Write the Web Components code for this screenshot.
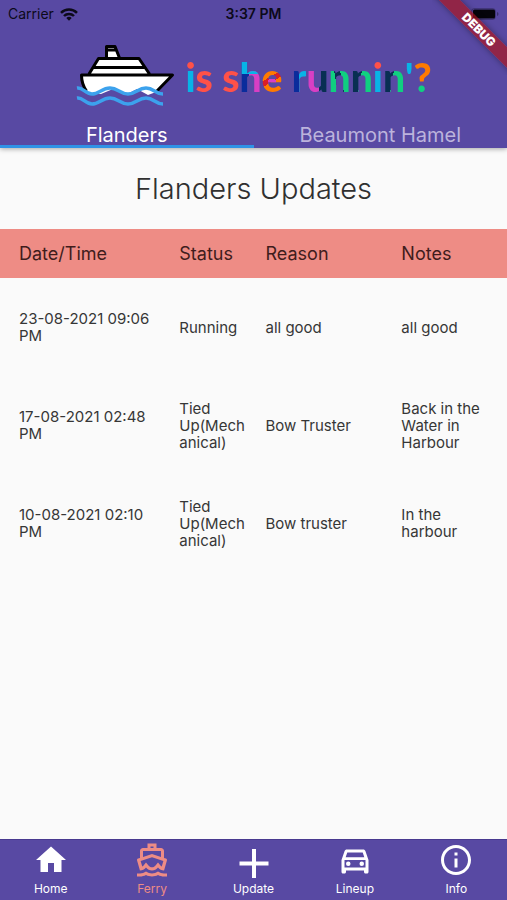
<!DOCTYPE html>
<html lang="en">
<head>
<meta charset="utf-8">
<meta name="viewport" content="width=device-width, initial-scale=1">
<title>is she runnin'?</title>
<style>
html, body { margin: 0; height: 100%; }
body { font-family: Inter, "Liberation Sans", sans-serif; background: #fafafa; }
</style>
</head>
<body>
<ferry-app></ferry-app>

<template id="t-app">
<style>
:host { display: flex; flex-direction: column; min-height: 100vh; position: relative; overflow: hidden; background: #fafafa; --purple: #5849a3; --salmon: #ee8c85; }
header { background: var(--purple); box-shadow: 0 1px 5px rgba(0,0,0,.35); }
main { flex: 1; }
h1 { margin: 0; padding: 25px 0 24px; font-size: 29px; line-height: 32px; font-weight: 300; text-align: center; color: #303030; }
</style>
<header>
  <status-bar></status-bar>
  <brand-logo></brand-logo>
  <tab-strip><tab-item selected>Flanders</tab-item><tab-item>Beaumont Hamel</tab-item></tab-strip>
</header>
<main>
  <h1>Flanders Updates</h1>
  <updates-table></updates-table>
</main>
<bottom-nav></bottom-nav>
<debug-ribbon>DEBUG</debug-ribbon>
</template>

<template id="t-status">
<style>
:host { display: grid; grid-template-columns: 1fr auto 1fr; align-items: center; height: 28px; padding: 0 8px; font-size: 14px; line-height: 28px; color: #0c0a1a; }
.left { display: flex; align-items: center; gap: 6px; }
.time { font-weight: 600; }
.battery { justify-self: end; }
svg { display: block; }
</style>
<span class="left">Carrier
  <svg width="18" height="13" viewBox="0 0 18 13" fill="none" stroke="#0c0a1a" stroke-width="2.5"><path d="M1 4.8a11.4 11.4 0 0 1 16 0M4 8a7 7 0 0 1 10 0"/><path d="M9 12.7 6.3 10a3.8 3.8 0 0 1 5.4 0z" fill="#0c0a1a" stroke="none"/></svg>
</span>
<span class="time">3:37 PM</span>
<svg class="battery" width="28" height="12" viewBox="0 0 28 12"><rect x=".5" y=".5" width="24" height="11" rx="3" fill="none" stroke="#0c0a1a" stroke-opacity=".3"/><rect x="2" y="1.500" width="22" height="9" rx="1.5" fill="#05040a"/><path d="M26 4v4q1.500-.6 1.500-2T26 4z" fill="#0c0a1a" fill-opacity=".4"/></svg>
</template>

<template id="t-logo">
<style>
:host { display: flex; justify-content: center; align-items: flex-start; gap: 10px; height: 94px; box-sizing: border-box; }
svg { display: block; margin-top: 15px; }
.word { margin-top: 25px; font: 900 39px/48px Lato, "Open Sans", sans-serif; white-space: pre; display: flex; }
.word span { background: var(--c); -webkit-background-clip: text; background-clip: text; -webkit-text-fill-color: transparent; }
.red { --c: #ff5148; color: #ff5148; }
.i { --c: linear-gradient(#ff5148 0 38%, #08b4e6 38%); color: #08b4e6; }
.h { --c: linear-gradient(#08b4e6 0 43%, transparent 43%), linear-gradient(90deg, #0a2c9c 0 45%, #d83fc4 45%); color: #d83fc4; }
.e { --c: radial-gradient(circle at 50% 60%, #d83fc4 0 4px, transparent 4px), linear-gradient(150deg, #ff7a00 0 48%, #d81e28 48% 58%, #ff7a00 58%); color: #ff7a00; }
.r { --c: linear-gradient(90deg, #0a2c9c 0 52%, #08b4e6 52%); color: #08b4e6; }
.u { --c: linear-gradient(90deg, #d83fc4 0 55%, #082f52 55%); color: #d83fc4; }
.n { --c: linear-gradient(100deg, #082f52 0 46%, #10cf80 46%); color: #10cf80; }
.n1 { --c: linear-gradient(80deg, #10cf80 0 34%, #082f52 34% 54%, #10cf80 54%); color: #10cf80; }
.a { --c: #08b4e6; color: #08b4e6; }
.q { --c: linear-gradient(#ff7a00 0 66%, #10cf80 66%); color: #ff7a00; }
</style>
<svg width="100" height="66" viewBox="78 43 100 66" fill="none" role="img" aria-label="Ferry">
  <path d="M84.500 75H175L159 92l-8 3-11-6-12 6-12-6-12 5-16-1z" fill="#fff"/>
  <path d="M92 74l9-15h41l11 15M109 58V47h9l4 11" fill="#fff"/>
  <path d="M159 92l16.500-17H84.500q0 9 5 16M92 74l9.500-15.500h40.500L152.500 74M97 67.500h51M109.500 58V46.500h8.500l4.500 11.500M110 50h9" stroke="#000" stroke-width="3" stroke-linejoin="round"/>
  <path d="M80 88c6-1 8 6 15 6s10-6 18-6 10 6 18 6 10-6 18-6 9 6 17 6M80 98c6-1 8 6 15 6s10-6 18-6 10 6 18 6 10-6 18-6 9 6 17 6" stroke="#3ca2ed" stroke-width="3.500"/>
</svg>
<div class="word"><span class="i">i</span><span class="red">s</span><span> </span><span class="red">s</span><span class="h">h</span><span class="e">e</span><span> </span><span class="r">r</span><span class="u">u</span><span class="n1">n</span><span class="n">n</span><span class="i">i</span><span class="n">n</span><span class="a">'</span><span class="q">?</span></div>
</template>

<template id="t-tabs">
<style>:host { display: flex; }</style>
<slot></slot>
</template>

<template id="t-tab">
<style>
:host { display: block; flex: 1 1 0; min-width: 0; }
button { display: block; width: 100%; height: 26px; border: 0; padding: 0; background: none; font: 400 20px/26px Inter, sans-serif; color: #bcb3dc; white-space: nowrap; }
:host([selected]) button { color: #fff; box-shadow: inset 0 -3px #2f92e6; }
</style>
<button type="button"><slot></slot></button>
</template>

<template id="t-table">
<style>
:host { display: block; }
table { width: 100%; border-collapse: collapse; table-layout: fixed; }
col:nth-child(1) { width: 33%; } col:nth-child(2) { width: 17%; } col:nth-child(3) { width: 27%; } col:nth-child(4) { width: 23%; }
th, td { padding: 0 8px 0 12px; text-align: left; vertical-align: middle; }
th:first-child, td:first-child { padding-left: 19px; }
th:last-child, td:last-child { padding-left: 11px; padding-right: 19px; }
th { height: 49px; background: var(--salmon); font-size: 18px; line-height: 22px; font-weight: 400; color: #401c1c; white-space: nowrap; }
td { height: 98px; font-size: 15px; line-height: 17px; color: #363636; overflow-wrap: anywhere; }
</style>
<table><colgroup><col><col><col><col></colgroup>
<thead><tr><th>Date/Time</th><th>Status</th><th>Reason</th><th>Notes</th></tr></thead>
<tbody></tbody></table>
</template>

<template id="t-nav">
<style>
:host { display: block; background: var(--purple); border-top: 1px solid #48398f; }
nav { display: flex; height: 60px; }
</style>
<nav>
<nav-item label="Home"><svg viewBox="0 0 24 24"><path d="M10 20v-6h4v6h5v-8h3L12 3 2 12h3v8z"/></svg></nav-item>
<nav-item label="Ferry" selected><svg viewBox="0 0 24 24"><path fill-rule="evenodd" d="M9 1h6v3h3c1.100 0 2 .9 2 2v4.620l1.280.42c.26.08.48.26.6.5s.14.52.06.78L20.050 19H20c-1.600 0-3.020-.88-4-2-.98 1.120-2.400 2-4 2s-3.020-.88-4-2c-.98 1.120-2.400 2-4 2h-.05l-1.900-6.680c-.09-.26-.06-.54.06-.78s.34-.42.6-.5L4 10.620V6c0-1.100.9-2 2-2h3zM11 3v1h2V3zM6 6v3.970L12 8l6 1.970V6zM4.420 12.600l1.080 3.800c.4-.2.700-.5 1-.9L8 13.700l1.500 1.800c.6.700 1.500 1.400 2.500 1.400s1.900-.7 2.500-1.400l1.500-1.800 1.500 1.800c.3.400.600.7 1 .9l1.080-3.800L12 10.110z"/><path d="M20 21c-1.390 0-2.780-.47-4-1.320-2.440 1.710-5.560 1.710-8 0C6.780 20.530 5.390 21 4 21H2v2h2c1.380 0 2.740-.35 4-.99 2.520 1.290 5.480 1.290 8 0 1.260.65 2.620.99 4 .99h2v-2z"/></svg></nav-item>
<nav-item label="Update"><svg viewBox="0 0 36 36"><path d="M16 7h4v12.500h12.500v4H20V36h-4V23.500H3.500v-4H16z"/></svg></nav-item>
<nav-item label="Lineup"><svg viewBox="0 0 24 24"><path fill-rule="evenodd" d="M18.920 6.010C18.720 5.420 18.160 5 17.500 5h-11c-.66 0-1.210.42-1.420 1.010L3 12v8c0 .55.45 1 1 1h1c.55 0 1-.45 1-1v-1h12v1c0 .55.45 1 1 1h1c.55 0 1-.45 1-1v-8zM6.850 7h10.290l1.080 3.110H5.770zM19 17H5v-5h14z"/><circle cx="7.500" cy="14.500" r="1.500"/><circle cx="16.500" cy="14.500" r="1.500"/></svg></nav-item>
<nav-item label="Info"><svg viewBox="0 0 24 24"><path d="M11 7h2v2h-2zm0 4h2v6h-2zm1-9C6.480 2 2 6.480 2 12s4.480 10 10 10 10-4.480 10-10S17.520 2 12 2zm0 18c-4.410 0-8-3.590-8-8s3.590-8 8-8 8 3.590 8 8-3.590 8-8 8z"/></svg></nav-item>
</nav>
</template>

<template id="t-item">
<style>
:host { display: block; flex: 1 1 0; min-width: 0; }
a { display: flex; flex-direction: column; align-items: center; padding-top: 2px; gap: 3px; color: #fff; text-decoration: none; font-size: 12px; line-height: 15px; }
:host([selected]) a { color: #ee8c85; }
::slotted(svg) { display: block; width: 36px; height: 36px; fill: currentColor; }
span.icon { display: block; height: 36px; }
</style>
<a href="#"><span class="icon"><slot></slot></span><span class="label"></span></a>
</template>

<template id="t-ribbon">
<style>
:host { position: absolute; top: 0; right: 0; width: 75px; height: 75px; overflow: hidden; pointer-events: none; }
div { position: absolute; left: 50%; top: 50%; width: 140px; height: 15px; margin: -16px 0 0 -61px; transform: rotate(45deg); background: rgba(172,20,28,.68); box-shadow: 0 0 6px rgba(0,0,0,.4); color: #fff; font-size: 12px; line-height: 15px; font-weight: 900; text-align: center; }
</style>
<div><slot></slot></div>
</template>

<script>
class Base extends HTMLElement {
  constructor() {
    super();
    this.attachShadow({ mode: 'open' }).append(
      document.getElementById(this.constructor.template).content.cloneNode(true));
  }
}
const define = (tag, id) => customElements.define(tag, class extends Base { static template = id; });

class UpdatesTable extends Base {
  static template = 't-table';
  connectedCallback() {
    const rows = [
      ['23-08-2021 09:06 PM', 'Running', 'all good', 'all good'],
      ['17-08-2021 02:48 PM', 'Tied Up(Mechanical)', 'Bow Truster', 'Back in the Water in Harbour'],
      ['10-08-2021 02:10 PM', 'Tied Up(Mechanical)', 'Bow truster', 'In the harbour']
    ];
    const body = this.shadowRoot.querySelector('tbody');
    body.replaceChildren();
    for (const row of rows) {
      const tr = body.insertRow();
      for (const text of row) tr.insertCell().textContent = text;
    }
  }
}

class NavItem extends Base {
  static template = 't-item';
  connectedCallback() {
    this.shadowRoot.querySelector('.label').textContent = this.getAttribute('label');
    this.shadowRoot.querySelector('a').href = '#' + this.getAttribute('label').toLowerCase();
  }
}

define('status-bar', 't-status');
define('brand-logo', 't-logo');
define('tab-item', 't-tab');
define('tab-strip', 't-tabs');
customElements.define('updates-table', UpdatesTable);
customElements.define('nav-item', NavItem);
define('bottom-nav', 't-nav');
define('debug-ribbon', 't-ribbon');
define('ferry-app', 't-app');
</script>
</body>
</html>
